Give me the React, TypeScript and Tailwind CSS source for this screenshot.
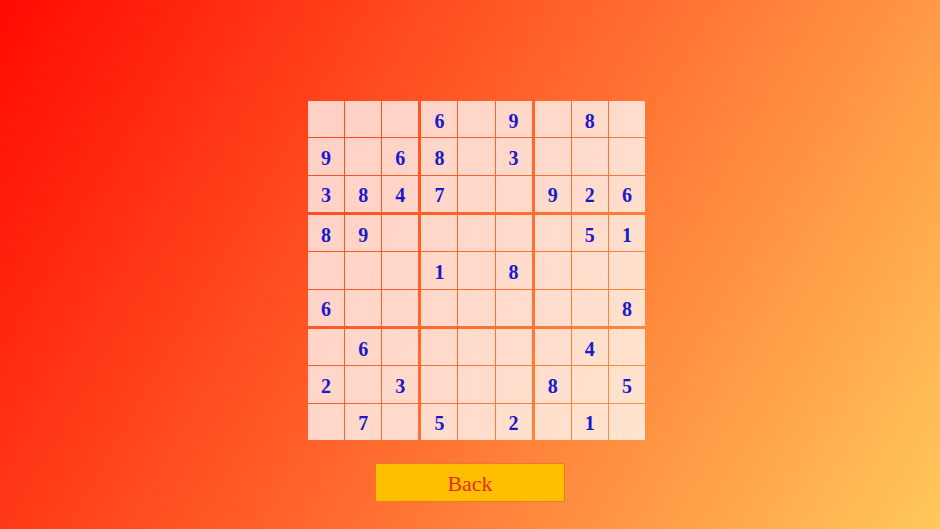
import React from "react";

const puzzle: string[] = [
  "000609080",
  "906803000",
  "384700926",
  "890000051",
  "000108000",
  "600000008",
  "060000040",
  "203000805",
  "070502010",
];

function Block({ br, bc }: { br: number; bc: number }) {
  const cells: React.ReactNode[] = [];
  for (let r = 0; r < 3; r++) {
    for (let c = 0; c < 3; c++) {
      const ch = puzzle[br * 3 + r][bc * 3 + c];
      cells.push(
        <div
          key={`${r}-${c}`}
          className="bg-white/75 flex items-center justify-center pt-[3px] text-[20px] font-bold text-[#1a1acc] leading-none"
          style={{ fontFamily: '"Liberation Serif", "Times New Roman", serif' }}
        >
          {ch === "0" ? "" : ch}
        </div>
      );
    }
  }
  return <div className="grid grid-cols-3 grid-rows-3 gap-px">{cells}</div>;
}

export default function App() {
  const blocks: React.ReactNode[] = [];
  for (let br = 0; br < 3; br++) {
    for (let bc = 0; bc < 3; bc++) {
      blocks.push(<Block key={`${br}-${bc}`} br={br} bc={bc} />);
    }
  }
  return (
    <div className="w-[940px] h-[529px] bg-[linear-gradient(120deg,#ff0a00,#ffc85c)] flex flex-col items-center pt-[101px]">
      <div className="ml-[13px] w-[337px] h-[339px] grid grid-cols-3 grid-rows-3 gap-[3px]">
        {blocks}
      </div>
      <button
        className="mt-[23px] w-[190px] h-[39px] bg-[#ffbf00] border border-[#ec7a2c] text-[#e0301c] text-[22px] pt-[2px] flex items-center justify-center"
        style={{ fontFamily: '"Liberation Serif", "Times New Roman", serif' }}
      >
        Back
      </button>
    </div>
  );
}
